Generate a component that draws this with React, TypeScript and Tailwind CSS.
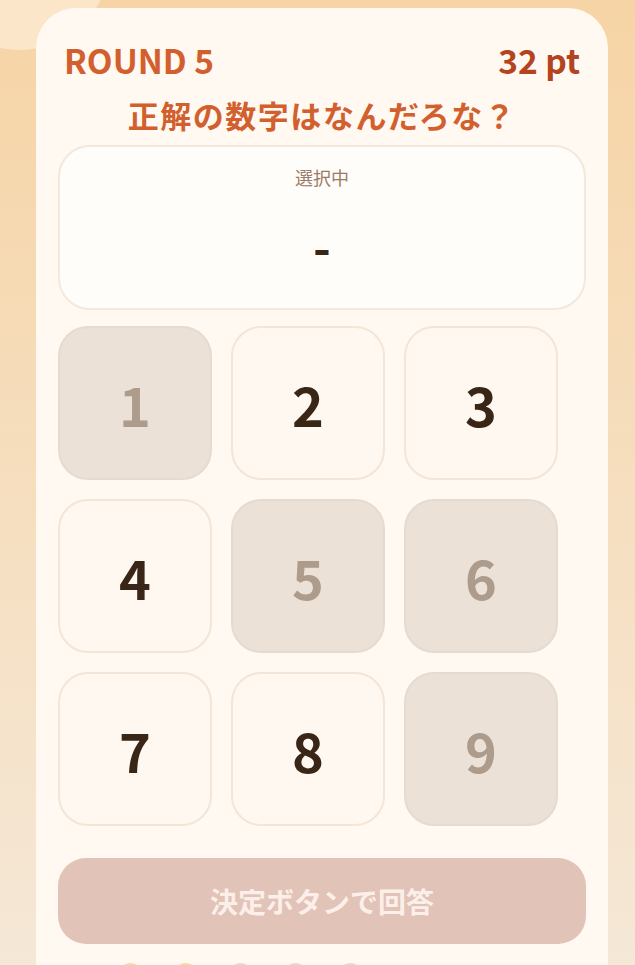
import React from "react";

const keys = [
  { n: 1, disabled: true },
  { n: 2, disabled: false },
  { n: 3, disabled: false },
  { n: 4, disabled: false },
  { n: 5, disabled: true },
  { n: 6, disabled: true },
  { n: 7, disabled: false },
  { n: 8, disabled: false },
  { n: 9, disabled: true },
];

const dots = ["hit", "hit", "none", "none", "none"];

export default function App() {
  return (
    <div
      className="relative min-h-screen overflow-hidden bg-gradient-to-b from-[#f6d4a5] to-[#f5e9da] px-[36px] pt-[8px]"
      style={{ fontFamily: '"Noto Sans CJK JP", "Noto Sans", sans-serif' }}
    >
      {/* soft blob in the corner */}
      <div className="absolute left-[-70px] top-[-130px] h-[180px] w-[180px] rounded-full bg-[#fbe6c9]" />

      <div className="relative w-[572px] rounded-[40px] bg-[#fff9f1] px-[22px] pt-[32px] pb-[40px]">
        <div className="flex items-center justify-between px-[6px]">
          <span className="text-[33.5px] font-bold leading-[40px] text-[#d2602e]">ROUND 5</span>
          <span className="text-[33.5px] font-bold leading-[40px] text-[#b3441e]">32 pt</span>
        </div>

        <h1 className="mt-[15px] text-center text-[31px] font-bold leading-[40px] tracking-[0.05em] text-[#d2602e]">
          正解の数字はなんだろな？
        </h1>

        <div className="mt-[10px] flex h-[165px] flex-col items-center rounded-[32px] border-2 border-[#f3e8dd] bg-[#fffdf9] pt-[18px]">
          <span className="text-[18px] leading-[24px] text-[#9b7b66]">選択中</span>
          <span className="mt-[32px] text-[48px] font-bold leading-[48px] text-[#3a2617]">-</span>
        </div>

        <div className="mt-[16px] grid w-fit grid-cols-[repeat(3,154px)] gap-[19px]">
          {keys.map((k) =>
            k.disabled ? (
              <button
                key={k.n}
                disabled
                className="flex h-[154px] w-[154px] items-center justify-center rounded-[30px] border-2 border-[#e6dbd0] bg-[#ebe1d7] text-[54px] font-bold text-[#ad9b8c]"
              >
                {k.n}
              </button>
            ) : (
              <button
                key={k.n}
                className="flex h-[154px] w-[154px] items-center justify-center rounded-[30px] border-2 border-[#f3e5d7] bg-[#fff8f0] text-[54px] font-bold text-[#3a2617]"
              >
                {k.n}
              </button>
            )
          )}
        </div>

        <button
          disabled
          className="mt-[32px] flex h-[86px] w-full items-center justify-center rounded-[28px] bg-[#e1c3b8] text-[28px] font-bold text-[#fcefe9]"
        >
          決定ボタンで回答
        </button>

        <div className="mt-[19px] flex gap-[30px] pl-[60px]">
          {dots.map((d, i) =>
            d === "hit" ? (
              <span key={i} className="h-[25px] w-[25px] rounded-full bg-[#f3dc9f]" />
            ) : (
              <span key={i} className="h-[25px] w-[25px] rounded-full bg-[#e2dbd4]" />
            )
          )}
        </div>
      </div>
    </div>
  );
}
